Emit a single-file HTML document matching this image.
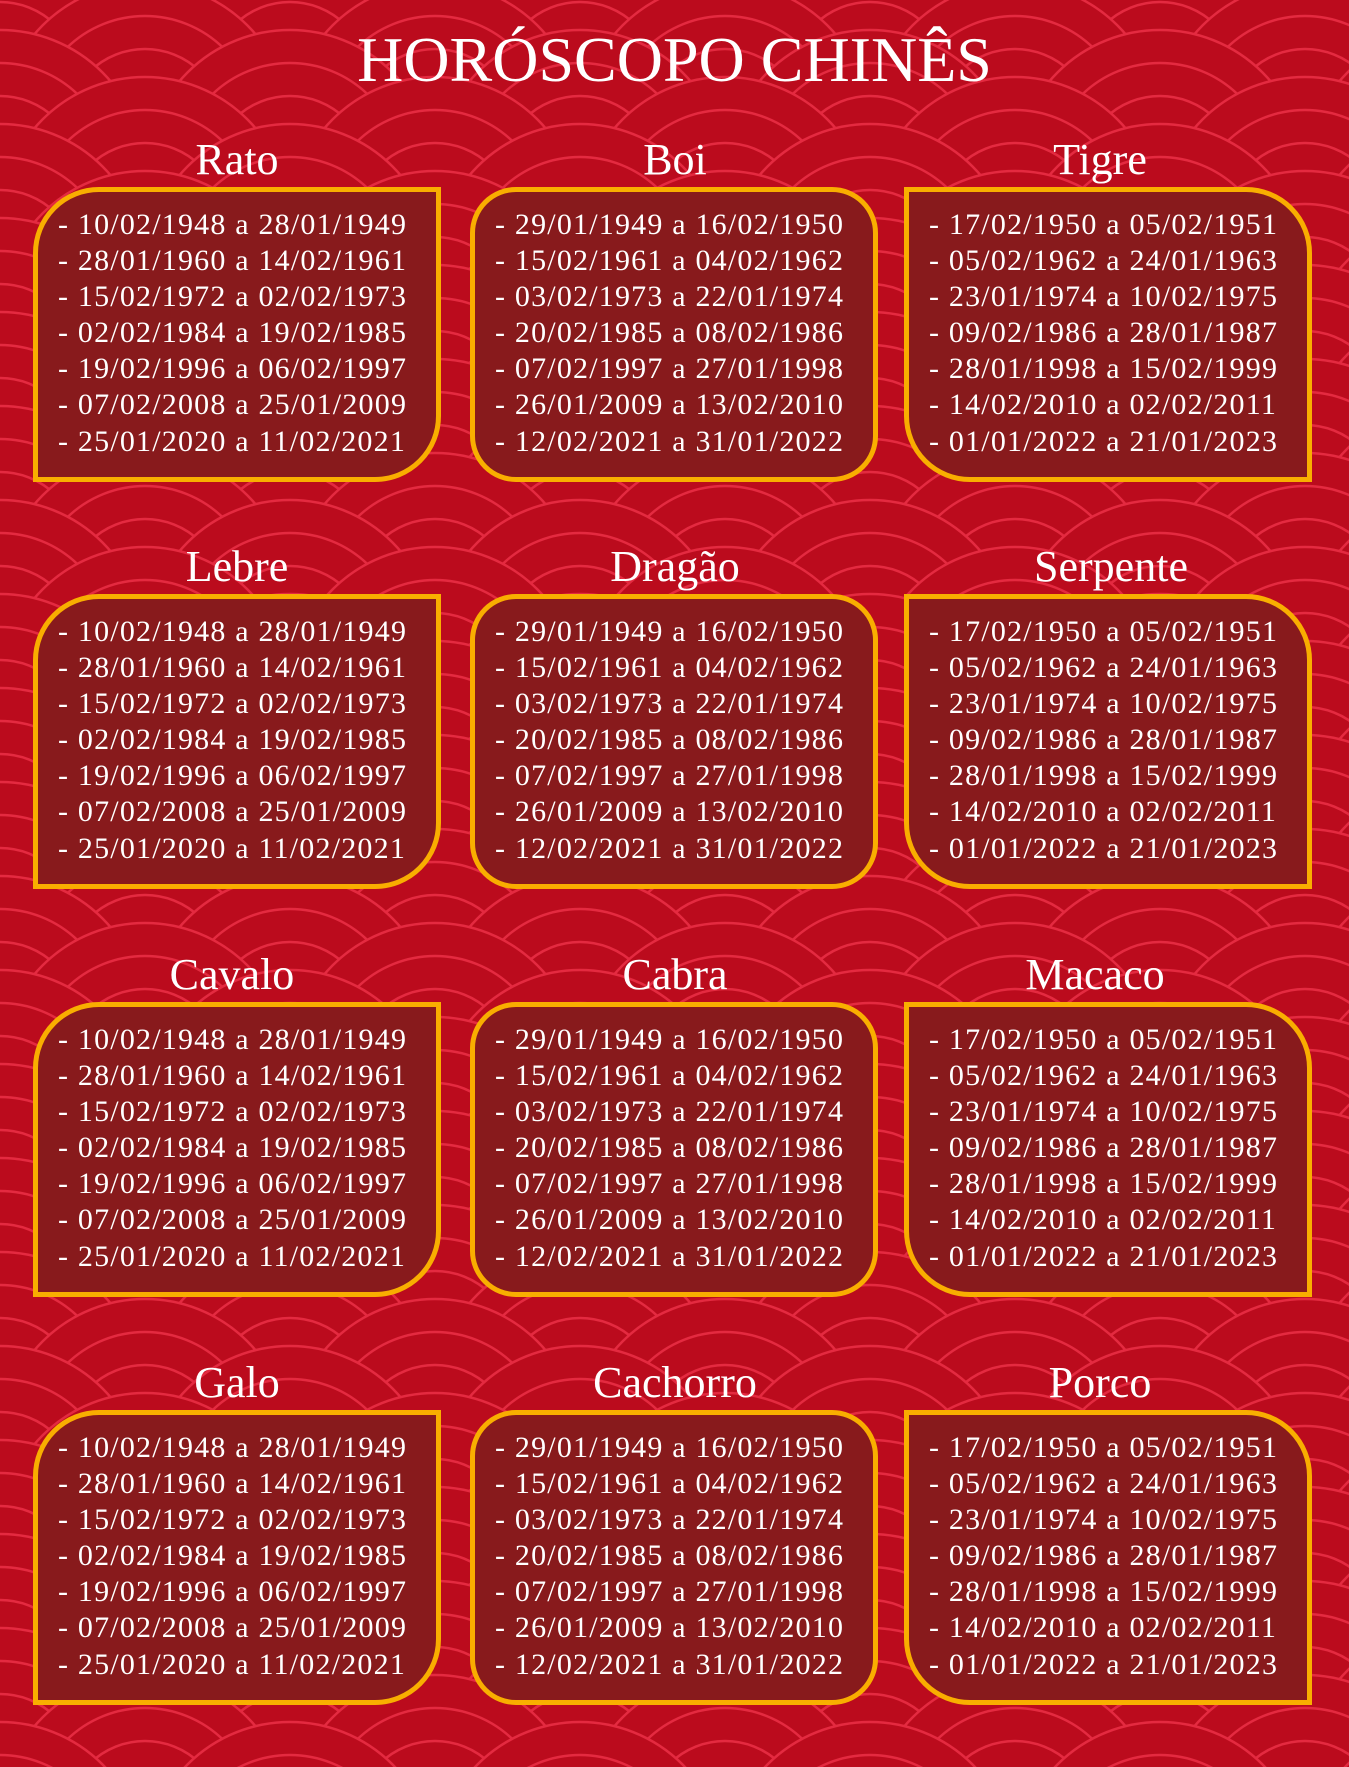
<!DOCTYPE html>
<html><head><meta charset="utf-8">
<style>
html,body{margin:0;padding:0}
body{width:1349px;height:1767px;position:relative;overflow:hidden;background:#bb0b1d;font-family:"Liberation Serif",serif;color:#fff}
svg.bg{position:absolute;left:0;top:0}
.main{position:absolute;left:0;width:1349px;top:25px;text-align:center;font-size:64px;line-height:70px}
.t{position:absolute;width:408px;text-align:center;font-size:44px;line-height:50px}
.b{position:absolute;width:398px;height:285px;border:5px solid #f9ae00;background:#881a1c}
.b div{position:absolute;left:20px;top:15px;font-size:30px;line-height:36.1px;letter-spacing:1.2px;white-space:nowrap}
.c1{border-radius:66px 0 66px 0}
.c2{border-radius:46px}
.c3{border-radius:0 66px 0 66px}
</style></head><body>
<svg class="bg" width="1349" height="1767">
<defs>
<g id="s"><circle r="145" fill="#bb0b1d" stroke="#e42a40" stroke-width="2.5"/><circle r="112" fill="none" stroke="#e42a40" stroke-width="2.5"/><circle r="79" fill="none" stroke="#e42a40" stroke-width="2.5"/><circle r="46" fill="none" stroke="#e42a40" stroke-width="2.5"/></g>
<pattern id="p" width="290" height="94" patternUnits="userSpaceOnUse">
<use href="#s" x="0" y="-13"/><use href="#s" x="290" y="-13"/>
<use href="#s" x="145" y="34"/>
<use href="#s" x="0" y="81"/><use href="#s" x="290" y="81"/>
<use href="#s" x="145" y="128"/>
<use href="#s" x="0" y="175"/><use href="#s" x="290" y="175"/>
<use href="#s" x="145" y="222"/>
</pattern></defs>
<rect width="1349" height="1767" fill="url(#p)"/>
</svg>
<div class="main">HORÓSCOPO CHINÊS</div>

<div class="t" style="left:33px;top:135px">Rato</div>
<div class="t" style="left:471px;top:135px">Boi</div>
<div class="t" style="left:896px;top:135px">Tigre</div>
<div class="t" style="left:33px;top:542px">Lebre</div>
<div class="t" style="left:471px;top:542px">Dragão</div>
<div class="t" style="left:907px;top:542px">Serpente</div>
<div class="t" style="left:891px;top:950px">Macaco</div>
<div class="t" style="left:28px;top:950px">Cavalo</div>
<div class="t" style="left:471px;top:950px">Cabra</div>
<div class="t" style="left:33px;top:1358px">Galo</div>
<div class="t" style="left:471px;top:1358px">Cachorro</div>
<div class="t" style="left:896px;top:1358px">Porco</div>

<div class="b c1" style="left:33px;top:187px"><div>- 10/02/1948 a 28/01/1949<br>- 28/01/1960 a 14/02/1961<br>- 15/02/1972 a 02/02/1973<br>- 02/02/1984 a 19/02/1985<br>- 19/02/1996 a 06/02/1997<br>- 07/02/2008 a 25/01/2009<br>- 25/01/2020 a 11/02/2021</div></div>
<div class="b c2" style="left:470px;top:187px"><div>- 29/01/1949 a 16/02/1950<br>- 15/02/1961 a 04/02/1962<br>- 03/02/1973 a 22/01/1974<br>- 20/02/1985 a 08/02/1986<br>- 07/02/1997 a 27/01/1998<br>- 26/01/2009 a 13/02/2010<br>- 12/02/2021 a 31/01/2022</div></div>
<div class="b c3" style="left:904px;top:187px"><div>- 17/02/1950 a 05/02/1951<br>- 05/02/1962 a 24/01/1963<br>- 23/01/1974 a 10/02/1975<br>- 09/02/1986 a 28/01/1987<br>- 28/01/1998 a 15/02/1999<br>- 14/02/2010 a 02/02/2011<br>- 01/01/2022 a 21/01/2023</div></div>

<div class="b c1" style="left:33px;top:594px"><div>- 10/02/1948 a 28/01/1949<br>- 28/01/1960 a 14/02/1961<br>- 15/02/1972 a 02/02/1973<br>- 02/02/1984 a 19/02/1985<br>- 19/02/1996 a 06/02/1997<br>- 07/02/2008 a 25/01/2009<br>- 25/01/2020 a 11/02/2021</div></div>
<div class="b c2" style="left:470px;top:594px"><div>- 29/01/1949 a 16/02/1950<br>- 15/02/1961 a 04/02/1962<br>- 03/02/1973 a 22/01/1974<br>- 20/02/1985 a 08/02/1986<br>- 07/02/1997 a 27/01/1998<br>- 26/01/2009 a 13/02/2010<br>- 12/02/2021 a 31/01/2022</div></div>
<div class="b c3" style="left:904px;top:594px"><div>- 17/02/1950 a 05/02/1951<br>- 05/02/1962 a 24/01/1963<br>- 23/01/1974 a 10/02/1975<br>- 09/02/1986 a 28/01/1987<br>- 28/01/1998 a 15/02/1999<br>- 14/02/2010 a 02/02/2011<br>- 01/01/2022 a 21/01/2023</div></div>

<div class="b c1" style="left:33px;top:1002px"><div>- 10/02/1948 a 28/01/1949<br>- 28/01/1960 a 14/02/1961<br>- 15/02/1972 a 02/02/1973<br>- 02/02/1984 a 19/02/1985<br>- 19/02/1996 a 06/02/1997<br>- 07/02/2008 a 25/01/2009<br>- 25/01/2020 a 11/02/2021</div></div>
<div class="b c2" style="left:470px;top:1002px"><div>- 29/01/1949 a 16/02/1950<br>- 15/02/1961 a 04/02/1962<br>- 03/02/1973 a 22/01/1974<br>- 20/02/1985 a 08/02/1986<br>- 07/02/1997 a 27/01/1998<br>- 26/01/2009 a 13/02/2010<br>- 12/02/2021 a 31/01/2022</div></div>
<div class="b c3" style="left:904px;top:1002px"><div>- 17/02/1950 a 05/02/1951<br>- 05/02/1962 a 24/01/1963<br>- 23/01/1974 a 10/02/1975<br>- 09/02/1986 a 28/01/1987<br>- 28/01/1998 a 15/02/1999<br>- 14/02/2010 a 02/02/2011<br>- 01/01/2022 a 21/01/2023</div></div>

<div class="b c1" style="left:33px;top:1410px"><div>- 10/02/1948 a 28/01/1949<br>- 28/01/1960 a 14/02/1961<br>- 15/02/1972 a 02/02/1973<br>- 02/02/1984 a 19/02/1985<br>- 19/02/1996 a 06/02/1997<br>- 07/02/2008 a 25/01/2009<br>- 25/01/2020 a 11/02/2021</div></div>
<div class="b c2" style="left:470px;top:1410px"><div>- 29/01/1949 a 16/02/1950<br>- 15/02/1961 a 04/02/1962<br>- 03/02/1973 a 22/01/1974<br>- 20/02/1985 a 08/02/1986<br>- 07/02/1997 a 27/01/1998<br>- 26/01/2009 a 13/02/2010<br>- 12/02/2021 a 31/01/2022</div></div>
<div class="b c3" style="left:904px;top:1410px"><div>- 17/02/1950 a 05/02/1951<br>- 05/02/1962 a 24/01/1963<br>- 23/01/1974 a 10/02/1975<br>- 09/02/1986 a 28/01/1987<br>- 28/01/1998 a 15/02/1999<br>- 14/02/2010 a 02/02/2011<br>- 01/01/2022 a 21/01/2023</div></div>
</body></html>
